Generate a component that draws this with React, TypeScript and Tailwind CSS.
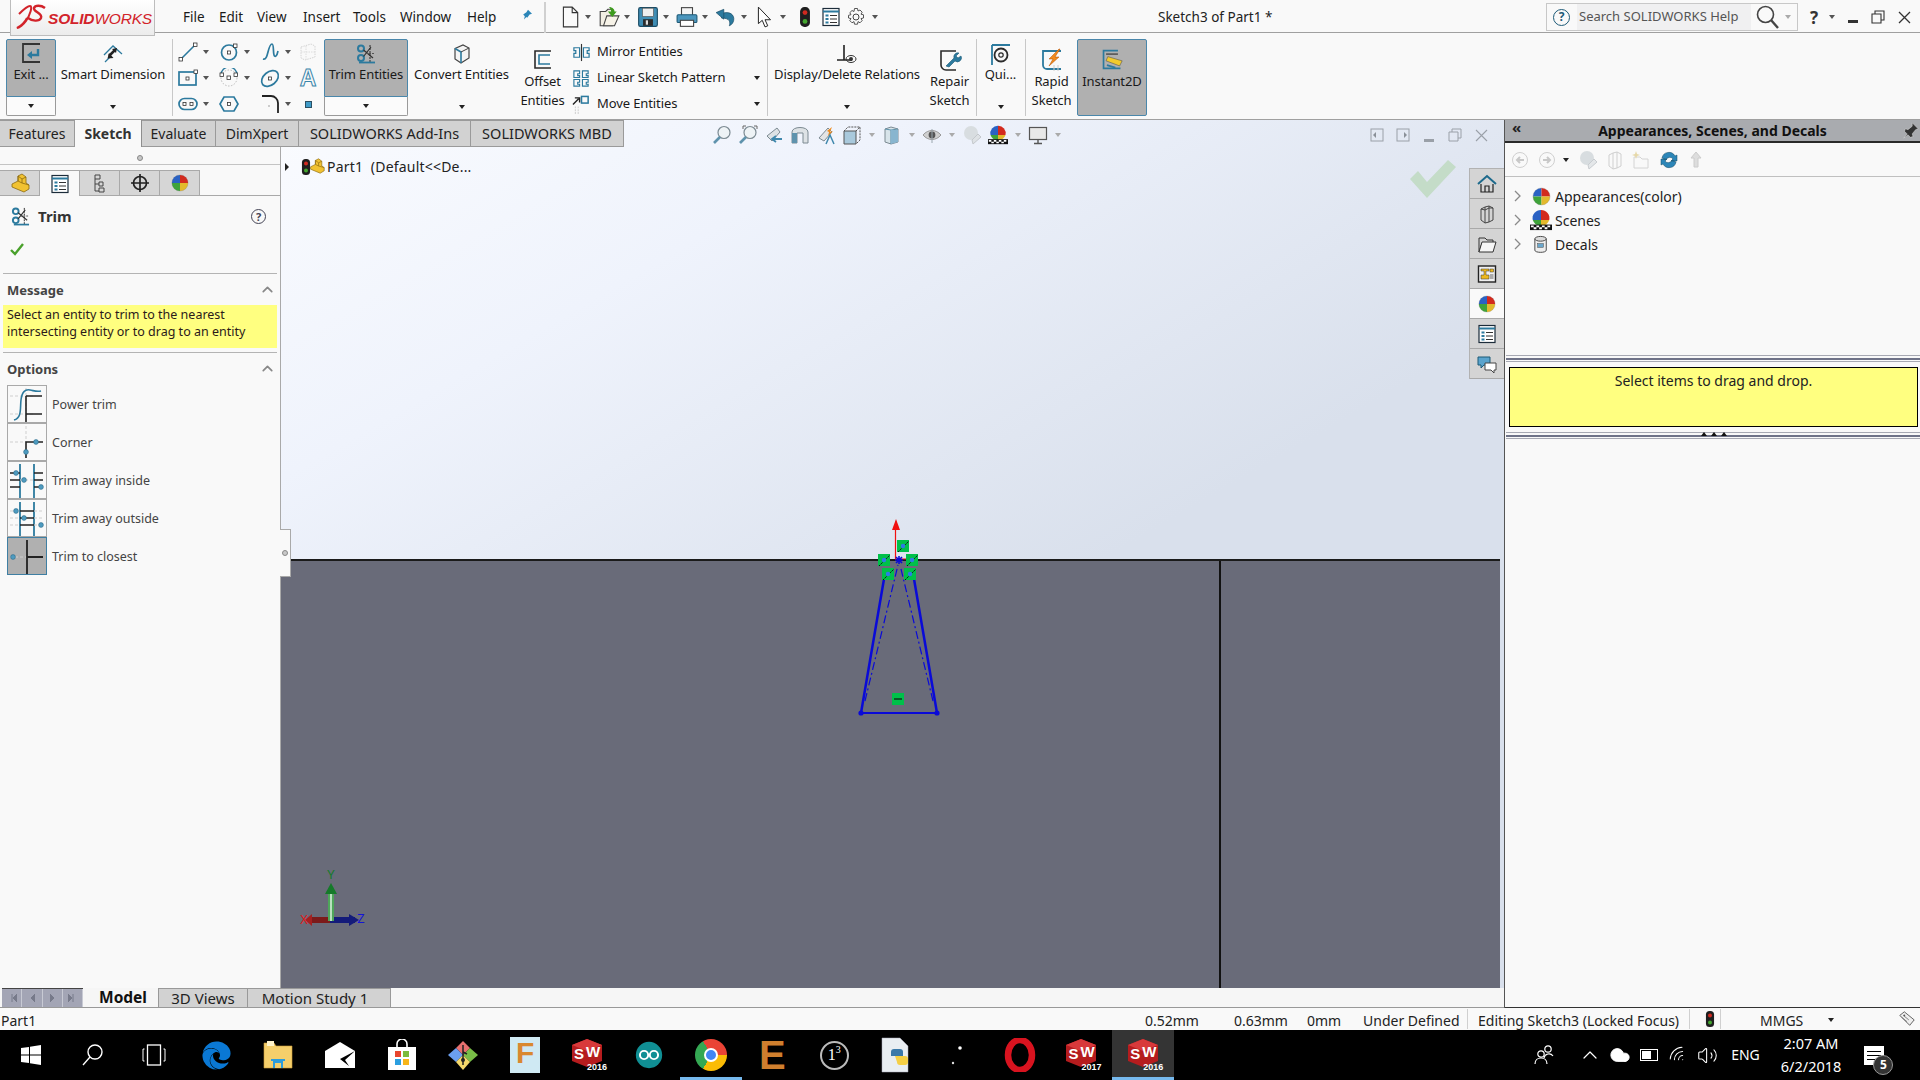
import type { ReactNode } from "react";
import { Cloud, ChevronUp, Wifi, Volume2 } from "lucide-react";
import { FaEdge } from "react-icons/fa";

const BLUE = "#2c7a9e";
const DARK = "#2b2b2b";

function Caret({ dark = false, light = false }: { dark?: boolean; light?: boolean }) {
  return (
    <span
      className={`block h-0 w-0 shrink-0 border-x-[3.5px] border-t-[4px] border-x-transparent ${
        light ? "border-t-[#aaaaaa]" : dark ? "border-t-[#222222]" : "border-t-[#555555]"
      }`}
    />
  );
}

function Svg({ s = 20, vb = 20, children }: { s?: number; vb?: number; children: ReactNode }) {
  return (
    <svg width={s} height={s} viewBox={`0 0 ${vb} ${vb}`} fill="none" className="block shrink-0">
      {children}
    </svg>
  );
}

function Ball({ s = 18 }: { s?: number }) {
  return (
    <Svg s={s}>
      <path d="M10 10V1A9 9 0 0 0 1 10Z" fill="#2a62c4" />
      <path d="M10 10V1A9 9 0 0 1 19 10Z" fill="#d32a1e" />
      <path d="M10 10H1A9 9 0 0 0 10 19Z" fill="#3fa33a" />
      <path d="M10 10H19A9 9 0 0 1 10 19Z" fill="#e3b92c" />
      <circle cx="10" cy="10" r="9" stroke="#55555555" strokeWidth="0.6" />
    </Svg>
  );
}

function Scenes({ s = 24 }: { s?: number }) {
  return (
    <Svg s={s} vb={24}>
      <path d="M12 12V1A9 9 0 0 0 3 12Z" fill="#2a62c4" />
      <path d="M12 12V1A9 9 0 0 1 21 12Z" fill="#d32a1e" />
      <path d="M3 12a9 9 0 0 0 9 6V12Z" fill="#3fa33a" />
      <path d="M21 12a9 9 0 0 1-9 6V12Z" fill="#e3b92c" />
      <rect x="0" y="17" width="24" height="6" fill="#111" />
      <path d="M1 18h3v2H1ZM7 18h3v2H7ZM13 18h3v2h-3ZM19 18h3v2h-3ZM4 20h3v2H4ZM10 20h3v2h-3ZM16 20h3v2h-3Z" fill="#fff" />
    </Svg>
  );
}

function Traffic({ s = 20 }: { s?: number }) {
  return (
    <Svg s={s}>
      <rect x="5.5" y="1" width="9" height="18" rx="4" fill="#1f1f1f" />
      <circle cx="10" cy="6" r="2.2" fill="#d12a20" />
      <circle cx="10" cy="14" r="2.2" fill="#43a62e" />
    </Svg>
  );
}

function ListIcon({ s = 20 }: { s?: number }) {
  return (
    <Svg s={s}>
      <rect x="2" y="1.5" width="16" height="17" fill="#fff" stroke="#1c2c3a" strokeWidth="1.2" />
      <path d="M2 4.5h16" stroke="#2c7a9e" strokeWidth="2" />
      <path d="M4.500 7.500h3v2h-3ZM4.500 11h3v2h-3ZM4.500 14.500h3v2h-3Z" fill="#2c7a9e" />
      <path d="M9 8.500h7M9 12h7M9 15.500h7" stroke="#333" />
    </Svg>
  );
}

function PartIcon({ s = 20 }: { s?: number }) {
  return (
    <Svg s={s}>
      <path d="M2 11 8 8V3l4-2 4 3v6l3 2v4l-5 3-12-5Z" fill="#f1c232" stroke="#8a6a10" strokeWidth="0.8" />
      <path d="M8 3l4 3v4l-4-2ZM12 10l7 2M12 6l4-2" stroke="#8a6a10" strokeWidth="0.8" />
    </Svg>
  );
}

function TrimIcon({ s = 20 }: { s?: number }) {
  return (
    <Svg s={s}>
      <circle cx="5" cy="4.500" r="3" stroke={BLUE} strokeWidth="2" />
      <circle cx="5" cy="14" r="3" stroke={BLUE} strokeWidth="2" />
      <path d="M7.500 6 17 14M7.500 12.500 15 3" stroke="#333" strokeWidth="1.200" />
      <path d="M14 1v18" stroke={DARK} strokeWidth="1" strokeDasharray="2 1" />
      <path d="M3 18.500h16" stroke={BLUE} strokeWidth="1.800" />
      <path d="M10 9.500h9" stroke="#555" strokeWidth="1" strokeDasharray="2 1" />
    </Svg>
  );
}

function ExitIcon() {
  return (
    <Svg s={24} vb={24}>
      <path d="M21 2H4v18h17" stroke="#333" strokeWidth="1.800" />
      <path d="M19 7v6h-9" stroke={BLUE} strokeWidth="2.400" />
      <path d="M8 13l5-4v8Z" fill={BLUE} />
    </Svg>
  );
}

function SmartDimIcon() {
  return (
    <Svg s={22} vb={22}>
      <path d="M2 12l9-9 9 8" stroke="#2c7a9e" strokeWidth="1.300" />
      <path d="M3 19l5-5" stroke={BLUE} strokeWidth="1.300" />
      <path d="M7 13 13 7" stroke="#222" strokeWidth="2.500" />
      <path d="M5.500 15.500 7 10l4.500 5ZM15 5l-1 5-4-4Z" fill="#222" />
    </Svg>
  );
}

function ConvertIcon() {
  return (
    <Svg s={22} vb={22}>
      <path d="M4 5.500 12 2l6 3v10l-8 5-6-4Z" fill="#f4f4f4" stroke="#444" strokeWidth="1.200" />
      <path d="M4 5.500l6 3.500v11" stroke={BLUE} strokeWidth="1.600" />
      <path d="M10 9l8-4" stroke="#444" />
    </Svg>
  );
}

function OffsetIcon() {
  return (
    <Svg s={22} vb={22}>
      <path d="M19 2H3v17h16" stroke="#2b2b2b" strokeWidth="1.600" />
      <path d="M18 6H7v9h11" stroke={BLUE} strokeWidth="1.600" />
    </Svg>
  );
}

function DisplayIcon() {
  return (
    <Svg s={22} vb={22}>
      <path d="M8 2v15M1 17h15" stroke="#222" strokeWidth="1.600" />
      <ellipse cx="15" cy="16" rx="5" ry="3.500" stroke="#333" />
      <circle cx="15" cy="16" r="2" fill="#333" />
    </Svg>
  );
}

function RepairIcon() {
  return (
    <Svg s={24} vb={24}>
      <path d="M18 22H8a5 5 0 0 1-5-5V3h15" stroke="#2b2b2b" strokeWidth="1.600" />
      <path d="M8 18l8-8a4 4 0 0 1 5-5l-3 3 2 2 3-2a4 4 0 0 1-6 5l-6 6Z" fill={BLUE} stroke="#1d5a77" strokeWidth="0.600" />
    </Svg>
  );
}

function QuickIcon() {
  return (
    <Svg s={24} vb={24}>
      <path d="M3 3h18M3 3v20" stroke={BLUE} strokeWidth="1.800" />
      <circle cx="12" cy="13" r="6.500" stroke="#2b2b2b" strokeWidth="1.800" />
      <circle cx="12" cy="13" r="2.200" stroke="#2b2b2b" strokeWidth="1.200" />
    </Svg>
  );
}

function RapidIcon() {
  return (
    <Svg s={24} vb={24}>
      <path d="M21 3H3v14a4 4 0 0 0 4 4h14" stroke={BLUE} strokeWidth="1.800" />
      <path d="M19 1 9 11h4l-4 7 10-9h-4l5-8Z" fill="#f08a1d" stroke="#b34c00" strokeWidth="0.500" />
      <path d="M14 17v6M18 17v6" stroke="#ccc" />
    </Svg>
  );
}

function InstantIcon() {
  return (
    <Svg s={22} vb={26}>
      <path d="M20 2H3v21h20" stroke={BLUE} strokeWidth="2" />
      <path d="M6 6h14" stroke="#333" strokeWidth="1.400" />
      <path d="M8 9l17 5-3 6-16-6Z" fill="#f2cb2d" stroke="#555" strokeWidth="0.700" />
      <path d="M7 19l10 3" stroke={BLUE} strokeWidth="2" />
    </Svg>
  );
}

const sketchTools: ReactNode[] = [
  <>
    <path d="M3 17 17 3" stroke={BLUE} strokeWidth="1.600" />
    <rect x="1" y="15.500" width="3.500" height="3.500" fill="#fff" stroke="#333" strokeWidth="0.800" />
    <rect x="15.500" y="1" width="3.500" height="3.500" fill="#fff" stroke="#333" strokeWidth="0.800" />
  </>,
  <>
    <circle cx="10" cy="10.500" r="7.500" stroke={BLUE} strokeWidth="1.700" />
    <rect x="8.500" y="9" width="3" height="3" fill="#fff" stroke="#333" strokeWidth="0.800" />
    <rect x="14.500" y="2" width="3.500" height="3.500" fill="#fff" stroke="#333" strokeWidth="0.800" />
  </>,
  <path d="M3 17c3 1 4-3 5-7s2-8 4-8 1 8 2 11 3 1 4-4" stroke={BLUE} strokeWidth="1.700" />,
  <>
    <rect x="1" y="4" width="17" height="13" stroke={BLUE} strokeWidth="1.700" />
    <rect x="8" y="9" width="3" height="3" fill="#fff" stroke="#333" strokeWidth="0.800" />
    <rect x="16" y="2" width="3.500" height="3.500" fill="#fff" stroke="#333" strokeWidth="0.800" />
  </>,
  <>
    <path d="M2 7a8 8 0 0 1 16 0" stroke={BLUE} strokeWidth="1.400" />
    <circle cx="10" cy="10" r="8" stroke="#bbb" strokeDasharray="1.500 1.500" />
    <rect x="1" y="5" width="3.500" height="3.500" fill="#fff" stroke="#333" strokeWidth="0.800" />
    <rect x="8" y="8" width="3.500" height="3.500" fill="#fff" stroke="#333" strokeWidth="0.800" />
    <rect x="15" y="5" width="3.500" height="3.500" fill="#fff" stroke="#333" strokeWidth="0.800" />
  </>,
  <>
    <ellipse cx="10" cy="10.500" rx="9.500" ry="6.500" transform="rotate(-40 10 10.500)" stroke={BLUE} strokeWidth="1.700" />
    <rect x="8.500" y="9" width="3" height="3" fill="#fff" stroke="#333" strokeWidth="0.800" />
  </>,
  <>
    <rect x="1" y="4.500" width="18" height="11" rx="5.500" stroke={BLUE} strokeWidth="1.700" />
    <rect x="5" y="8.500" width="3" height="3" fill="#fff" stroke="#333" strokeWidth="0.800" />
    <rect x="12" y="8.500" width="3" height="3" fill="#fff" stroke="#333" strokeWidth="0.800" />
  </>,
  <>
    <path d="M5 3h10l4 7-4 7H5l-4-7Z" stroke={BLUE} strokeWidth="1.700" />
    <rect x="8.500" y="8.500" width="3" height="3" fill="#fff" stroke="#333" strokeWidth="0.800" />
  </>,
  <>
    <path d="M2 2h9a7 7 0 0 1 7 7v10" stroke="#222" strokeWidth="1.800" />
    <path d="M8 11l2 2M10 11l-2 2" stroke="#ccc" />
  </>,
];

function SketchGrid() {
  const lastCol = [
    <div key="plane" className="flex h-[26px] items-center justify-center">
      <Svg>
        <path d="M3 5l10-3 4 2v11l-10 3-4-2Z" stroke="#d4d4d4" strokeDasharray="1.500 1" />
        <path d="M8 4v14M3 10h14" stroke="#dddddd" strokeDasharray="1.500 1" />
      </Svg>
    </div>,
    <div
      key="a"
      className="flex h-[26px] items-center justify-center font-['Liberation_Sans',sans-serif] text-[23px] font-bold leading-none text-transparent [-webkit-text-stroke:1px_#3a86ab]"
    >
      A
    </div>,
    <div key="pt" className="flex h-[26px] items-center justify-center">
      <span className="block h-[7px] w-[7px] border border-[#2b4f63] bg-[#3f9bc8]" />
    </div>,
  ];
  return (
    <div className="ml-[3px] grid h-[78px] grid-cols-[41px_41px_38px_24px] grid-rows-3">
      {sketchTools.flatMap((tool, i) => {
        const cell = (
          <div key={i} className="flex h-[26px] items-center">
            <span className="flex w-[24px] justify-center">
              <Svg>{tool}</Svg>
            </span>
            {i !== 7 && (
              <span className="ml-[3px]">
                <Caret />
              </span>
            )}
          </div>
        );
        return (i + 1) % 3 === 0 ? [cell, lastCol[(i + 1) / 3 - 1]] : [cell];
      })}
    </div>
  );
}

function BigTool({
  w,
  ml,
  label,
  icon,
  active = false,
}: {
  w: string;
  ml: string;
  label: string;
  icon: ReactNode;
  active?: boolean;
}) {
  return (
    <div className={`flex h-[77px] flex-col ${w} ${ml}`}>
      <div
        className={`flex h-[58px] flex-col items-center ${
          active ? "rounded-t-[2px] border border-[#4a87ab] bg-[#b0b0b0]" : "border border-transparent"
        }`}
      >
        <div className="flex h-[27px] items-center justify-center">{icon}</div>
        <span className="whitespace-nowrap text-center text-[13px] leading-[14px] tracking-[-0.1px] text-[#1a1a1a]">{label}</span>
      </div>
      <div
        className={`flex h-[19px] items-center justify-center ${
          active ? "rounded-b-[2px] border border-t-0 border-[#9a9a9a] bg-[#fbfbfb]" : ""
        }`}
      >
        <Caret dark />
      </div>
    </div>
  );
}

function TallTool({
  w,
  ml,
  lines,
  icon,
  active = false,
}: {
  w: string;
  ml: string;
  lines: string[];
  icon: ReactNode;
  active?: boolean;
}) {
  return (
    <div
      className={`flex h-[77px] flex-col items-center ${w} ${ml} ${
        active ? "rounded-[2px] border border-[#4a87ab] bg-[#b0b0b0] pt-[8px]" : "pt-[9px]"
      }`}
    >
      <div className="flex h-[24px] items-center justify-center">{icon}</div>
      {lines.map((line) => (
        <span key={line} className="whitespace-nowrap text-[13px] leading-[19px] tracking-[-0.1px] text-[#1a1a1a]">
          {line}
        </span>
      ))}
    </div>
  );
}

function Divider({ ml }: { ml: string }) {
  return <div className={`h-[77px] w-px bg-[#c8c8c8] ${ml}`} />;
}

function EntityList() {
  const rows: { label: string; caret: boolean; icon: ReactNode }[] = [
    {
      label: "Mirror Entities",
      caret: false,
      icon: (
        <>
          <path d="M10 1v18" stroke="#333" strokeWidth="1.200" />
          <path d="M8 5H2v3h2v3H2v4h6ZM12 5h6v3h-2v3h2v4h-6Z" stroke={BLUE} strokeWidth="1.300" />
        </>
      ),
    },
    {
      label: "Linear Sketch Pattern",
      caret: true,
      icon: <path d="M2 2h6v3H6v2h2v2H2ZM11 2h6v3h-2v2h2v2h-6ZM2 11h6v3H6v2h2v2H2ZM11 11h6v3h-2v2h2v2h-6Z" stroke={BLUE} strokeWidth="1.200" />,
    },
    {
      label: "Move Entities",
      caret: true,
      icon: (
        <>
          <path d="M1 10 7 4M3 3h5v5" stroke="#222" strokeWidth="1.500" />
          <rect x="10" y="1.500" width="7" height="7" stroke={BLUE} strokeWidth="1.600" />
          <path d="M3 13h1M6 13h1M3 16h1M6 16h1M3 19h1M6 19h1" stroke="#cccccc" strokeWidth="2" />
        </>
      ),
    },
  ];
  return (
    <div className="ml-[7px] flex h-[78px] w-[190px] flex-col">
      {rows.map((row) => (
        <div key={row.label} className="flex h-[26px] items-center">
          <span className="flex w-[20px] justify-center">
            <Svg s={19}>{row.icon}</Svg>
          </span>
          <span className="ml-[6px] flex-1 whitespace-nowrap text-[13px] tracking-[-0.1px] text-[#1a1a1a]">{row.label}</span>
          {row.caret && (
            <span className="mr-[1px]">
              <Caret dark />
            </span>
          )}
        </div>
      ))}
    </div>
  );
}

function DsLogo() {
  return (
    <svg width="32" height="28" viewBox="0 0 32 28" fill="none" className="block shrink-0">
      <path d="M4 11c6-6 9-8 11-8 3 0 0 9-4 15-2 3-7 7-9 7 4-2 8-6 10-10" stroke="#d2232a" strokeWidth="2" />
      <path d="M30 5c-4-3-10-3-11 0-1 4 9 5 7 10-2 4-9 3-13 0" stroke="#d2232a" strokeWidth="2.400" />
    </svg>
  );
}

function QuickAccess() {
  const tools: ReactNode[] = [
    <path key="new" d="M4 1h8l5 5v13H4ZM12 1v5h5" fill="#fafafa" stroke="#333" strokeWidth="1" />,
    <g key="open">
      <path d="M2 5h5l2-2h4v15H5L2 18Z" fill="#f3efe4" stroke="#444" />
      <path d="M5 18l3-9h11l-4 9Z" fill="#f7f3e8" stroke="#444" />
      <path d="M10 1c3 0 5 2 5 4h2l-4 5-4-5h3c0-1-1-3-2-4Z" fill="#3d9b1d" />
    </g>,
    <g key="save">
      <rect x="1.500" y="1.500" width="17" height="17" rx="1.500" fill="#3f8db4" stroke="#1a4a63" />
      <rect x="5" y="2" width="10" height="7.500" fill="#eee" stroke="#555" strokeWidth="0.600" />
      <rect x="5.500" y="12" width="9" height="6" fill="#2b2b2b" />
      <rect x="8" y="13" width="2" height="4" fill="#ddd" />
    </g>,
    <g key="print">
      <rect x="5" y="1.500" width="10" height="8" fill="#f5f5f5" stroke="#444" />
      <rect x="1" y="8" width="18" height="7" rx="1" fill="#4b96bd" stroke="#1d5a77" />
      <rect x="4" y="13" width="12" height="5.500" fill="#fff" stroke="#444" />
    </g>,
    <g key="undo">
      <path d="M6 7c7-3 12 1 11 6-.4 2-1.500 4-4 5 1-3 1-7-7-7Z" fill="#2c7a9e" stroke="#174a63" strokeWidth="0.600" />
      <path d="M1 6l7-3v9Z" fill="#2c7a9e" stroke="#174a63" strokeWidth="0.600" />
    </g>,
    <path key="sel" d="M4 1v15l3.500-3 2.500 6 2.500-1-2.500-5.500h5Z" fill="#fff" stroke="#222" strokeWidth="0.900" />,
  ];
  return (
    <div className="flex items-center">
      {tools.map((icon, i) => (
        <div key={i} className="flex w-[39px] items-center">
          <span className="flex w-[24px] justify-center">
            <Svg s={22}>{icon}</Svg>
          </span>
          <span className="ml-[3px]">
            <Caret />
          </span>
        </div>
      ))}
      <span className="ml-[3px] flex w-[20px] justify-center">
        <Traffic s={22} />
      </span>
      <span className="ml-[5px] flex w-[22px] justify-center">
        <ListIcon s={20} />
      </span>
      <span className="ml-[3px] flex w-[22px] justify-center">
        <Svg s={20}>
          <circle cx="10" cy="10" r="3" stroke="#444" />
          <path
            d="M8.500 1.500h3l.5 2.500 2-1 2.200 2.200-1.200 2 2.500.6v3.200l-2.500.6 1.200 2-2.200 2.200-2-1.200-.5 2.600h-3l-.5-2.600-2 1.200-2.200-2.200 1.200-2-2.500-.6V8.300l2.500-.6-1.200-2 2.200-2.200 2 1Z"
            stroke="#444"
            strokeWidth="0.900"
          />
        </Svg>
      </span>
      <span className="ml-[5px]">
        <Caret />
      </span>
    </div>
  );
}

function TitleBar() {
  const menu = [
    ["File", "w-[36px]"],
    ["Edit", "w-[38px]"],
    ["View", "w-[46px]"],
    ["Insert", "w-[50px]"],
    ["Tools", "w-[47px]"],
    ["Window", "w-[67px]"],
    ["Help", "w-[52px]"],
  ];
  return (
    <div className="flex h-[33px] shrink-0 items-center border-b border-[#a0a0a0] bg-[#f9f9f9] pt-[2px]">
      <div className="relative z-20 -mt-[2px] ml-[10px] flex h-[36px] w-[145px] items-start gap-[1px] self-start border border-t-0 border-[#bdbdbd] bg-[linear-gradient(#ffffff,#ececec)] pl-[4px] pt-[3px]">
        <DsLogo />
        <span className="mt-[7px] whitespace-nowrap font-['Liberation_Sans',sans-serif] text-[15.5px] italic leading-[18px] tracking-[-0.2px] text-[#d2232a]">
          <b>SOLID</b>WORKS
        </span>
      </div>
      <div className="ml-[28px] flex text-[13.5px] text-[#1a1a1a]">
        {menu.map(([m, w]) => (
          <span key={m} className={w}>
            {m}
          </span>
        ))}
      </div>
      <span className="ml-[1px]">
        <Svg s={16}>
          <path d="M10 1l5 5-3 1-3 4-1-1-3 3 1-4-2-2 4-3Z" fill="#2c86b8" />
        </Svg>
      </span>
      <div className="ml-[8px] mr-[12px] h-[31px] w-[2px] bg-[#d0d0d0]" />
      <QuickAccess />
      <span className="ml-[280px] w-[113px] whitespace-nowrap text-[13.5px] text-[#222]">Sketch3 of Part1 *</span>
      <div className="ml-[275px] flex h-[28px] w-[252px] items-center border border-[#c8c8c8]">
        <span className="ml-[6px] flex h-[17px] w-[17px] items-center justify-center rounded-full border border-[#1d5a77] text-[12px] font-bold leading-none text-[#1d5a77]">
          ?
        </span>
        <span className="ml-[7px] flex h-[26px] w-[174px] items-center bg-[#f0f0f1] pl-[2px] text-[13px] text-[#555]">
          Search SOLIDWORKS Help
        </span>
        <span className="ml-[4px]">
          <Svg s={26} vb={26}>
            <circle cx="10.500" cy="10.500" r="8" stroke="#444" strokeWidth="1.600" />
            <path d="M16 16l7 8" stroke="#444" strokeWidth="2.400" />
          </Svg>
        </span>
        <span className="ml-[4px]">
          <Caret light />
        </span>
      </div>
      <span className="ml-[12px] w-[10px] text-[17px] font-bold leading-none text-[#333]">?</span>
      <span className="ml-[9px]">
        <Caret />
      </span>
      <span className="ml-[13px] mt-[8px] h-[3px] w-[10px] bg-[#333]" />
      <span className="ml-[13px]">
        <Svg s={14} vb={14}>
          <path d="M1 4h9v9H1ZM4 4V1h9v9h-3" stroke="#333" strokeWidth="1.100" />
        </Svg>
      </span>
      <span className="ml-[13px]">
        <Svg s={13} vb={13}>
          <path d="M1 1l11 11M12 1 1 12" stroke="#333" strokeWidth="1.300" />
        </Svg>
      </span>
    </div>
  );
}

function Ribbon() {
  return (
    <div className="flex h-[87px] shrink-0 items-start border-b border-[#a0a0a0] bg-[#f9f9f9] pt-[6px]">
      <BigTool w="w-[50px]" ml="ml-[6px]" label="Exit ..." icon={<ExitIcon />} active />
      <BigTool w="w-[104px]" ml="ml-[5px]" label="Smart Dimension" icon={<SmartDimIcon />} />
      <Divider ml="ml-[7px]" />
      <SketchGrid />
      <BigTool w="w-[84px]" ml="ml-[4px]" label="Trim Entities" icon={<TrimIcon />} active />
      <BigTool w="w-[97px]" ml="ml-[5px]" label="Convert Entities" icon={<ConvertIcon />} />
      <TallTool w="w-[43px]" ml="ml-[11px]" lines={["Offset", "Entities"]} icon={<OffsetIcon />} />
      <EntityList />
      <Divider ml="ml-[6px]" />
      <BigTool w="w-[148px]" ml="ml-[5px]" label="Display/Delete Relations" icon={<DisplayIcon />} />
      <TallTool w="w-[47px]" ml="ml-[5px]" lines={["Repair", "Sketch"]} icon={<RepairIcon />} />
      <Divider ml="ml-[3px]" />
      <BigTool w="w-[31px]" ml="ml-[8px]" label="Qui..." icon={<QuickIcon />} />
      <Divider ml="ml-[9px]" />
      <TallTool w="w-[41px]" ml="ml-[5px]" lines={["Rapid", "Sketch"]} icon={<RapidIcon />} />
      <TallTool w="w-[70px]" ml="ml-[5px]" lines={["Instant2D"]} icon={<InstantIcon />} active />
    </div>
  );
}

function CommandTabs() {
  const tabs = [
    ["Features", "w-[75px] text-[14px]"],
    ["Sketch", "w-[67px] text-[14px]"],
    ["Evaluate", "w-[74px] text-[14px]"],
    ["DimXpert", "w-[83px] text-[14px]"],
    ["SOLIDWORKS Add-Ins", "w-[172px] text-[14.5px]"],
    ["SOLIDWORKS MBD", "w-[153px] text-[14.5px]"],
  ];
  return (
    <div className="flex h-[27px] shrink-0">
      {tabs.map(([t, w]) => (
        <div
          key={t}
          className={`flex items-center justify-center border-r border-[#8e8e8e] ${w} ${
            t === "Sketch" ? "bg-[#f9f9f9] font-bold text-[#333]" : "border-y border-[#9a9a9a] bg-[#d2d2d2] text-[#222]"
          }`}
        >
          {t}
        </div>
      ))}
    </div>
  );
}

function OptionIcon({ kind }: { kind: number }) {
  const dash = "#cfcfcf";
  const dot = (x: number, y: number) => <circle cx={x} cy={y} r="2.400" fill="#4e9bc0" stroke="#2c6a88" strokeWidth="0.600" />;
  return (
    <svg width="38" height="36" viewBox="0 0 38 36" fill="none" className="block">
      {kind === 0 && (
        <>
          <path d="M2 10h24M2 28h24M18 2v34" stroke={dash} strokeDasharray="3 2" />
          <path d="M18 10h16M18 28h16M18 10v26" stroke="#222" strokeWidth="1.600" />
          <path d="M6 34c8-2 6-12 7-20 1-8 4-11 9-10s7 2 11 1" stroke={BLUE} strokeWidth="1.600" />
        </>
      )}
      {kind === 1 && (
        <>
          <path d="M2 18h16M18 2v16" stroke={dash} strokeDasharray="3 2" />
          <path d="M18 34V18h17" stroke="#222" strokeWidth="1.600" />
          {dot(28, 18)}
          {dot(18, 28)}
        </>
      )}
      {kind === 2 && (
        <>
          <path d="M12 2v34M26 2v34" stroke={BLUE} strokeWidth="1.800" />
          <path d="M12 18h14" stroke={dash} strokeDasharray="3 2" />
          <path d="M2 11h10M2 18h10M2 25h10M26 11h9M26 18h9M26 25h9" stroke="#222" strokeWidth="1.600" />
          {dot(8, 11)}
          {dot(16, 18)}
          {dot(33, 25)}
        </>
      )}
      {kind === 3 && (
        <>
          <path d="M12 2v34M26 2v34" stroke={BLUE} strokeWidth="1.800" />
          <path d="M2 11h10M2 18h10M2 25h10M26 11h9M26 18h9M26 25h9" stroke={dash} strokeDasharray="3 2" />
          <path d="M12 11h14M12 18h14M12 25h14" stroke="#222" strokeWidth="1.600" />
          {dot(8, 11)}
          {dot(16, 18)}
          {dot(33, 25)}
        </>
      )}
      {kind === 4 && (
        <>
          <path d="M2 19h16" stroke={dash} strokeDasharray="3 2" />
          <path d="M19 2v36M19 19h16" stroke="#222" strokeWidth="1.800" />
          {dot(5, 19)}
        </>
      )}
    </svg>
  );
}

function SectionHeading({ label }: { label: string }) {
  return (
    <div className="flex h-[31px] items-center justify-between pl-[7px] pr-[4px] pt-[2px]">
      <span className="text-[13px] font-bold text-[#444]">{label}</span>
      <ChevronUp size={17} strokeWidth={2.400} className="-mt-[2px] text-[#888]" />
    </div>
  );
}

function LeftPanel() {
  const options = ["Power trim", "Corner", "Trim away inside", "Trim away outside", "Trim to closest"];
  return (
    <aside className="relative z-10 flex w-[281px] shrink-0 flex-col border-r border-[#a9a9a9] bg-[#f9f9f9]">
      <div className="flex h-[18px] items-start justify-center border-b border-[#c4c4c4] pt-[8px]">
        <span className="h-[6px] w-[6px] rounded-full border border-[#888] bg-[#c8c8c8]" />
      </div>
      <div className="mt-[5px] flex h-[26px] border-b border-[#a9a9a9]">
        {[
          <PartIcon key="p" />,
          <ListIcon key="l" />,
          <Svg key="c">
            <path d="M5 2h5v4H5ZM5 6v12h4M5 11h4M9 9h4v4H9ZM9 15h5v4H9Z" stroke="#444" />
          </Svg>,
          <Svg key="t">
            <circle cx="10" cy="10" r="6.500" stroke="#222" strokeWidth="1.700" />
            <path d="M10 1v18M1 10h18" stroke="#222" strokeWidth="1.700" />
          </Svg>,
          <Ball key="b" />,
        ].map((icon, i) => (
          <div
            key={i}
            className={`flex h-[25px] w-[40px] items-center justify-center border-r border-t border-[#a9a9a9] ${
              i === 1 ? "h-[26px] bg-[#f9f9f9]" : "bg-[#d6d6d6]"
            }`}
          >
            {icon}
          </div>
        ))}
      </div>
      <div className="flex h-[41px] items-center pl-[11px] pr-[14px]">
        <TrimIcon s={19} />
        <span className="ml-[8px] flex-1 text-[15px] font-bold text-[#333]">Trim</span>
        <span className="flex h-[15px] w-[15px] items-center justify-center rounded-full border border-[#445] text-[11px] font-bold leading-none text-[#445]">
          ?
        </span>
      </div>
      <div className="h-[36px] pl-[10px] pt-[5px]">
        <Svg s={14} vb={14}>
          <path d="M1 8l4 4 8-10" stroke="#4aa12c" strokeWidth="2.400" />
        </Svg>
      </div>
      <div className="mx-[3px] border-t border-[#b4b4b4]" />
      <SectionHeading label="Message" />
      <div className="mx-[3px] h-[43px] bg-[#ffff80] px-[4px] pt-[1px] text-[12.5px] leading-[17px] text-[#2b1a1a]">
        Select an entity to trim to the nearest
        <br />
        intersecting entity or to drag to an entity
      </div>
      <div className="mx-[3px] mt-[4px] border-t border-[#b4b4b4]" />
      <SectionHeading label="Options" />
      <div className="mt-[1px] flex flex-col">
        {options.map((label, i) => (
          <div key={label} className="flex h-[38px] items-center">
            <div
              className={`ml-[7px] flex h-[38px] w-[40px] items-center justify-center border ${
                i === 4 ? "border-[#3f7fa3] bg-[#b0b0b0]" : "border-[#a9a9a9] bg-[#f9f9f9]"
              }`}
            >
              <OptionIcon kind={i} />
            </div>
            <span className="ml-[5px] pt-[2px] text-[12.5px] text-[#444]">{label}</span>
          </div>
        ))}
      </div>
    </aside>
  );
}

// blue sketch with relations, sits on the graphics area like a canvas
function SketchDrawing() {
  return (
    <svg width="120" height="220" viewBox="0 0 120 220" fill="none" className="absolute left-[554px] top-[372px]">
      <path d="M61 0l4 11h-8Z" fill="#f01010" />
      <path d="M60.500 8v33M60 40h12" stroke="#f01010" strokeWidth="1.200" />
      <path d="M26 194 49 60M102 194 79 60" stroke="#0a0ad8" strokeWidth="2.500" />
      <path d="M26 194H102" stroke="#0a0ad8" strokeWidth="2" />
      <path d="M30 182 63 46M98 182 66 50" stroke="#0a0ad8" strokeWidth="1.200" strokeDasharray="8 3 2 3" />
      <circle cx="26" cy="194" r="2.600" fill="#0a0ad8" />
      <circle cx="102" cy="194" r="2.600" fill="#0a0ad8" />
      <path d="M60 41h8M64 37v8M61 38l6 6M67 38l-6 6" stroke="#0a0ad8" strokeWidth="1.600" />
      {[
        [68, 27],
        [49, 41],
        [77, 41],
        [53, 55],
        [75, 55],
      ].map(([x, y]) => (
        <g key={`${x}-${y}`}>
          <rect x={x - 6} y={y - 6} width="12" height="12" fill="#00c04a" />
          <path d={`M${x - 5} ${y + 6}L${x + 6} ${y - 5}`} stroke="#111" strokeWidth="1" strokeDasharray="2 1" />
          <circle cx={x} cy={y} r="2.200" fill="#2d7ae8" />
        </g>
      ))}
      <rect x="57" y="174" width="12" height="12" fill="#00c04a" />
      <path d="M59 180h8" stroke="#111" strokeWidth="1.200" />
    </svg>
  );
}

function Triad() {
  return (
    <svg width="80" height="65" viewBox="0 0 80 65" fill="none" className="absolute left-[14px] top-[718px]">
      <rect x="15" y="52" width="20" height="6" fill="#7c1a1a" />
      <path d="M10 55l7-6v12Z" fill="#a52020" />
      <rect x="35" y="52" width="25" height="6" fill="#141b7a" />
      <path d="M64 55l-10-6v12Z" fill="#141b7a" />
      <rect x="33" y="29" width="6" height="27" fill="#4ea65a" />
      <rect x="35" y="29" width="2" height="27" fill="#b8e0be" />
      <path d="M36 18l-6 11h12Z" fill="#157a2a" />
      <text x="9" y="59" textAnchor="middle" fontSize="13" fill="#e01818">X</text>
      <text x="36" y="14" textAnchor="middle" fontSize="13" fill="#157a2a">Y</text>
      <text x="66" y="58" textAnchor="middle" fontSize="13" fill="#1414d8">Z</text>
    </svg>
  );
}

function HeadsUp() {
  const g = "#9aa6ad";
  const mag = (
    <>
      <circle cx="12" cy="7.500" r="6" fill="#eef3f6" stroke="#7c8a92" strokeWidth="1.200" />
      <path d="M8 12l-6 6" stroke="#5f93ad" strokeWidth="2.600" />
    </>
  );
  const items: { w: string; caret?: boolean; icon?: ReactNode }[] = [
    { w: "w-[26px]", icon: mag },
    { w: "w-[26px]", icon: <>{mag}<path d="M8 1H5v3M16 1h3v3" stroke="#666" /></> },
    {
      w: "w-[26px]",
      icon: (
        <>
          <path d="M3 11 13 3l3 4-8 9Z" fill="#dde2e5" stroke="#7c8a92" />
          <path d="M18 14H9M12 11l-4 3 4 3" stroke="#3f88ad" strokeWidth="1.800" />
        </>
      ),
    },
    {
      w: "w-[26px]",
      icon: (
        <>
          <path d="M2 7c0-6 16-6 16 0v11h-5V8H7v10H2Z" fill="#dde2e5" stroke="#7c8a92" />
          <path d="M2 8h5v10H2Z" fill="#5f93ad" />
        </>
      ),
    },
    {
      w: "w-[26px]",
      icon: (
        <>
          <path d="M3 13 12 3l4 4-8 9Z" fill="#e4e4e4" stroke="#7c8a92" />
          <path d="M11 6l5-4-2 5 3-1-5 5 1-4Z" fill="#ee8a1c" />
          <path d="M10 19l4-9 4 9" stroke="#3f88ad" strokeWidth="1.500" />
        </>
      ),
    },
    {
      w: "w-[26px]",
      icon: (
        <>
          <path d="M2 6h12v13H2Z" fill="#a9c9dc" stroke="#555" />
          <path d="M2 6l4-4h12v13l-4 4M14 6l4-4" stroke="#555" strokeDasharray="2 1" />
        </>
      ),
    },
    { w: "w-[14px]", caret: true },
    {
      w: "w-[26px]",
      icon: (
        <>
          <path d="M3 4l6-2 7 2v13l-7 2-6-2Z" fill="#d8e4ea" stroke="#7c8a92" />
          <path d="M9 5v14M3 4l6 1 7-1" stroke="#5f93ad" strokeWidth="1.200" />
          <path d="M9 5h7v12l-7 2Z" fill="#88b5cf" />
        </>
      ),
    },
    { w: "w-[14px]", caret: true },
    {
      w: "w-[26px]",
      icon: (
        <>
          <path d="M1 10c5-6 13-6 18 0-5 6-13 6-18 0Z" fill="#cfcfcf" stroke="#9a9a9a" />
          <circle cx="10" cy="10" r="3.400" fill="#555" />
          <path d="M10 4v14" stroke={g} />
        </>
      ),
    },
    { w: "w-[14px]", caret: true },
    {
      w: "w-[26px]",
      icon: (
        <>
          <circle cx="9" cy="8" r="7" fill="#d8dde0" />
          <path d="M10 15l6-6 3 3-8 7Z" fill="#dee2e5" stroke="#c4c8cc" />
        </>
      ),
    },
    { w: "w-[26px]", icon: <Scenes s={20} /> },
    { w: "w-[14px]", caret: true },
    {
      w: "w-[26px]",
      icon: (
        <>
          <rect x="1.500" y="2.500" width="17" height="12" fill="#e8e8e8" stroke="#555" strokeWidth="1.200" />
          <path d="M10 15v3M6 18.500h8" stroke="#555" strokeWidth="1.400" />
        </>
      ),
    },
    { w: "w-[14px]", caret: true },
  ];
  return (
    <div className="absolute left-[709px] top-[5px] flex h-[20px] items-center">
      {items.map((it, i) => (
        <span key={i} className={`flex justify-center ${it.w}`}>
          {it.caret ? <Caret light /> : <Svg>{it.icon}</Svg>}
        </span>
      ))}
    </div>
  );
}

function ViewportControls() {
  return (
    <div className="absolute left-[1364px] top-[6px] flex h-[18px] items-center">
      <span className="flex w-[26px] justify-center">
        <Svg s={14} vb={14}>
          <rect x="1" y="1" width="12" height="12" stroke="#9aa0a8" />
          <path d="M6 4l-3 3 3 3Z" fill="#8a9098" />
        </Svg>
      </span>
      <span className="flex w-[26px] justify-center">
        <Svg s={14} vb={14}>
          <rect x="1" y="1" width="12" height="12" stroke="#9aa0a8" />
          <path d="M8 4l3 3-3 3Z" fill="#8a9098" />
        </Svg>
      </span>
      <span className="flex w-[26px] justify-center pt-[10px]">
        <span className="block h-[3px] w-[10px] bg-[#9aa0a8]" />
      </span>
      <span className="flex w-[26px] justify-center">
        <Svg s={14} vb={14}>
          <path d="M1 4h9v9H1ZM4 4V1h9v9h-3" stroke="#9aa0a8" />
        </Svg>
      </span>
      <span className="flex w-[26px] justify-center">
        <Svg s={13} vb={13}>
          <path d="M1 1l11 11M12 1 1 12" stroke="#9aa0a8" strokeWidth="1.100" />
        </Svg>
      </span>
    </div>
  );
}

function TaskPaneTabs() {
  const icons: ReactNode[] = [
    <Svg key="h" s={20}>
      <path d="M1 10 10 2l9 8" stroke="#1d6a8c" strokeWidth="2" />
      <path d="M4 10v8h12v-8M8 18v-6h4v6" stroke="#222" strokeWidth="1.200" />
    </Svg>,
    <Svg key="b" s={20}>
      <path d="M4 5l4-2 4-1 4 2v12l-4 2-4 1-4-3Z" stroke="#444" />
      <path d="M8 3v16M12 2v16M4 5l4 1 4-2 4 0" stroke="#444" />
    </Svg>,
    <Svg key="f" s={20}>
      <path d="M2 4h6l2 2h6v3H5L2 18Z" stroke="#333" />
      <path d="M5 8h14l-3 10H2Z" fill="#f6f6f6" stroke="#333" />
    </Svg>,
    <Svg key="v" s={20}>
      <rect x="1.500" y="2" width="17" height="16" fill="#f0f0f0" stroke="#222" strokeWidth="1.400" />
      <path d="M4 5h8v2H9v4h3v4H4v-4h3V7H4Z" fill="#eeb91e" stroke="#333" strokeWidth="0.500" />
      <rect x="13" y="5" width="3.500" height="3" fill="#eeb91e" stroke="#333" strokeWidth="0.500" />
      <rect x="13" y="10" width="3.500" height="5" fill="#aaa" />
    </Svg>,
    <Ball key="a" s={18} />,
    <ListIcon key="l" s={20} />,
    <Svg key="c" s={20}>
      <path d="M1 3h12v8H7l-3 3v-3H1Z" fill="#5ba4cd" stroke="#1d5a77" />
      <path d="M8 9h11v7h-2v3l-3-3H8Z" fill="#fff" stroke="#444" />
    </Svg>,
  ];
  return (
    <div className="absolute left-[1469px] top-[48px] z-10 flex w-[35px] flex-col border-l border-t border-[#b2b2b2]">
      {icons.map((icon, i) => (
        <div
          key={i}
          className={`flex h-[30px] items-center justify-center border-b border-[#a9a9a9] ${
            i === 4 ? "bg-[#f9f9f9]" : "bg-[#d4d4d4]"
          }`}
        >
          {icon}
        </div>
      ))}
    </div>
  );
}

function Splitter({ grips = false }: { grips?: boolean }) {
  return (
    <div className="relative ml-[1px] h-[7px] shrink-0 border-y border-[#a7a9b3] bg-[#6f7388] [background-clip:content-box] py-[1.5px]">
      {grips && (
        <div className="absolute left-[195px] top-[-1px] flex gap-[4px]">
          {[0, 1, 2].map((i) => (
            <span key={i} className="block h-0 w-0 border-x-[3px] border-b-[4px] border-x-transparent border-b-[#111]" />
          ))}
        </div>
      )}
    </div>
  );
}

function TaskPane() {
  const tree: { label: string; icon: ReactNode }[] = [
    { label: "Appearances(color)", icon: <Ball s={19} /> },
    { label: "Scenes", icon: <Scenes s={22} /> },
    {
      label: "Decals",
      icon: (
        <Svg s={19}>
          <path d="M3 4v12c0 3 12 3 12 0V4" fill="#eeeeee" stroke="#444" />
          <ellipse cx="9" cy="4" rx="6" ry="2.500" fill="#dcdcdc" stroke="#444" />
          <rect x="6" y="9" width="6" height="4" fill="#6aa7cc" stroke="#444" strokeWidth="0.500" />
        </Svg>
      ),
    },
  ];
  const tools: ReactNode[] = [
    <Svg key="1">
      <circle cx="10" cy="10" r="7.500" stroke="#d0d0d0" />
      <path d="M14 10H8M10 7l-3 3 3 3" stroke="#c8c8c8" strokeWidth="2" />
    </Svg>,
    <Svg key="2">
      <circle cx="10" cy="10" r="7.500" stroke="#d0d0d0" />
      <path d="M6 10h6M10 7l3 3-3 3" stroke="#c8c8c8" strokeWidth="2" />
    </Svg>,
    <Svg key="3">
      <circle cx="9" cy="8" r="7" fill="#d8dde0" />
      <path d="M10 15l6-6 3 3-8 7Z" fill="#e4e7e9" stroke="#c8ccd0" />
    </Svg>,
    <Svg key="4">
      <path d="M4 5l4-2 4-1 4 2v12l-4 2-4 1-4-3Z" stroke="#cfcfcf" />
      <path d="M8 3v16M12 2v16" stroke="#cfcfcf" />
    </Svg>,
    <Svg key="5">
      <path d="M2 7h6l2 2h6v9H2Z" stroke="#d4d4d4" />
      <path d="M4 1l1 3 3 1-3 1-1 3-1-3-3-1 3-1Z" fill="#e6d8a8" />
    </Svg>,
    <Svg key="6">
      <path d="M3 8a7 7 0 0 1 13-2l2-1v6h-6l2-2a4 4 0 0 0-7 1ZM17 12a7 7 0 0 1-13 2l-2 1V9h6l-2 2a4 4 0 0 0 7-1Z" fill="#2c86b8" stroke="#174a63" strokeWidth="0.500" />
    </Svg>,
    <Svg key="7">
      <path d="M10 2l5 6h-3v9H8V8H5Z" fill="#dddddd" stroke="#cccccc" />
    </Svg>,
  ];
  return (
    <aside className="flex w-[416px] shrink-0 flex-col border-l border-[#555] bg-[#f9f9f9]">
      <div className="relative flex h-[23px] shrink-0 items-center justify-center border-b-2 border-[#2a2a2a] bg-[#a9abaf]">
        <span className="absolute left-[7px] top-[-2px] text-[15px] font-bold leading-[18px] text-[#222]">«</span>
        <span className="text-[14px] font-bold text-[#111]">Appearances, Scenes, and Decals</span>
        <span className="absolute right-[1px] top-[2px]">
          <Svg s={17}>
            <path d="M12 1l7 7-3 1-4 5 1 3-3 1-3-3-5 4 4-5-3-3 1-3 3 1 5-4Z" fill="#333" stroke="#eee" strokeWidth="0.500" />
          </Svg>
        </span>
      </div>
      <div className="flex h-[34px] shrink-0 items-center border-b border-[#c0c0c0] pl-[1px]">
        {tools.map((t, i) => (
          <span key={i} className="flex items-center">
            <span className="flex w-[27px] justify-center">{t}</span>
            {i === 1 && (
              <span className="ml-[3px] mr-[5px]">
                <Caret dark />
              </span>
            )}
          </span>
        ))}
      </div>
      <div className="flex h-[178px] shrink-0 flex-col pt-[7px]">
        {tree.map((row) => (
          <div key={row.label} className="flex h-[24px] items-center">
            <span className="ml-[7px] flex w-[10px] justify-center">
              <svg width="7" height="12" viewBox="0 0 7 12" fill="none">
                <path d="M1 1l5 5-5 5" stroke="#8a8a8a" strokeWidth="1.300" />
              </svg>
            </span>
            <span className="ml-[7px] flex w-[24px] justify-center">{row.icon}</span>
            <span className="ml-[2px] text-[14px] text-[#222]">{row.label}</span>
          </div>
        ))}
      </div>
      <Splitter />
      <div className="ml-[4px] mr-[2px] mt-[5px] flex h-[60px] shrink-0 justify-center border border-black bg-[#ffff80] pt-[2px] text-[14px] text-[#222]">
        Select items to drag and drop.
      </div>
      <div className="mt-[5px]">
        <Splitter grips />
      </div>
      <div className="flex-1" />
      <div className="h-px bg-[#333]" />
    </aside>
  );
}

function BottomTabs() {
  const nav = ["M7 3v8M12 3 8 7l4 4", "M10 3 6 7l4 4", "M5 3l4 4-4 4", "M3 3l4 4-4 4M8 3v8"];
  return (
    <div className="flex h-[20px] shrink-0 items-stretch border-b border-[#999] bg-[#f6f6f6]">
      <div className="ml-[2px] flex w-[81px] border-t border-[#444] bg-[#a3a5b5]">
        {nav.map((d, i) => (
          <span key={i} className="flex flex-1 items-center justify-center border-r border-[#c8cad4]">
            <Svg s={14} vb={14}>
              <path d={d} fill="#777a8a" stroke="#777a8a" />
            </Svg>
          </span>
        ))}
      </div>
      <div className="flex w-[75px] items-center justify-end pr-[11px] text-[15.5px] font-bold leading-none text-[#111]">
        Model
      </div>
      <div className="flex w-[90px] items-center justify-center border-x border-t border-[#999] bg-[#d2d2d2] text-[15px] leading-none text-[#222]">
        3D Views
      </div>
      <div className="flex w-[143px] items-center justify-center border-r border-t border-[#999] bg-[#d2d2d2] pr-[8px] text-[15px] leading-none text-[#222]">
        Motion Study 1
      </div>
    </div>
  );
}

function StatusBar() {
  const Sep = () => <span className="-mt-[4px] h-[20px] w-px shrink-0 bg-[#d0d0d0]" />;
  return (
    <div className="flex h-[22px] shrink-0 items-center bg-[#f9f9f9] pt-[4px] text-[14px] leading-none text-[#222]">
      <span className="ml-px w-[1144px] shrink-0">Part1</span>
      <span className="w-[89px] shrink-0">0.52mm</span>
      <span className="w-[73px] shrink-0">0.63mm</span>
      <span className="w-[56px] shrink-0">0mm</span>
      <span className="w-[104px] shrink-0 whitespace-nowrap">Under Defined</span>
      <Sep />
      <span className="ml-[10px] w-[211px] shrink-0 whitespace-nowrap">Editing Sketch3 (Locked Focus)</span>
      <Sep />
      <span className="-mt-[4px] ml-[11px] w-[19px] shrink-0">
        <Traffic s={18} />
      </span>
      <Sep />
      <span className="ml-[39px] w-[68px] shrink-0">MMGS</span>
      <span className="-mt-[2px]">
        <Caret dark />
      </span>
      <span className="-mt-[4px] ml-[64px]">
        <Svg s={18}>
          <path d="M2 6l5-4 11 9-5 6Z" fill="#efefef" stroke="#555" />
          <path d="M4 8l6 5M6 6l6 5" stroke="#777" />
          <circle cx="7" cy="6" r="1" fill="#555" />
        </Svg>
      </span>
    </div>
  );
}

function SwIcon({ year }: { year: string }) {
  return (
    <span className="relative block h-[34px] w-[34px]">
      <svg width="34" height="30" viewBox="0 0 34 30" className="block">
        <path d="M17 1 32 7v16l-15 6-15-6V7Z" fill="#b51c1e" />
        <path d="M17 1 32 7 17 13 2 7Z" fill="#d8393b" />
      </svg>
      <span className="absolute left-[4px] top-[8px] font-['Liberation_Sans',sans-serif] text-[15px] font-bold leading-none text-white">S</span>
      <span className="absolute left-[16px] top-[6px] font-['Liberation_Sans',sans-serif] text-[15px] font-bold leading-none text-white">W</span>
      <span className="absolute bottom-0 right-[-3px] font-['Liberation_Sans',sans-serif] text-[9px] font-bold leading-none text-white">{year}</span>
    </span>
  );
}

function Taskbar() {
  const apps: { key: string; node: ReactNode; open?: boolean; active?: boolean }[] = [
    {
      key: "start",
      node: (
        <Svg s={20}>
          <path d="M0 3l8-1v7.500H0ZM9 1.800 20 0v9.500H9ZM0 10.500h8V18l-8-1ZM9 10.500h11V20L9 18.200Z" fill="#fff" />
        </Svg>
      ),
    },
    {
      key: "search",
      node: (
        <Svg s={24} vb={24}>
          <circle cx="14" cy="9" r="7" stroke="#fff" strokeWidth="1.400" />
          <path d="M9 14 2 22" stroke="#fff" strokeWidth="1.400" />
        </Svg>
      ),
    },
    {
      key: "taskview",
      node: (
        <Svg s={24} vb={24}>
          <rect x="5.500" y="2" width="13" height="20" stroke="#fff" strokeWidth="1.300" />
          <path d="M2.500 6H1v12h1.500M21.500 6H23v12h-1.500" stroke="#fff" />
        </Svg>
      ),
    },
    { key: "edge", node: <FaEdge size={29} className="text-[#0a78d4]" /> },
    {
      key: "explorer",
      node: (
        <Svg s={30} vb={30}>
          <path d="M1 3h10l2 3h16v22H1Z" fill="#f5cf6b" stroke="#c99c35" strokeWidth="0.600" />
          <path d="M4 1h7v5H4Z" fill="#fff3c9" />
          <path d="M8 19h14v2h-2v7H10v-7H8Z" fill="#2d9ddc" />
          <rect x="12" y="23" width="6" height="5" fill="#f5cf6b" />
        </Svg>
      ),
    },
    {
      key: "mail",
      node: (
        <Svg s={30} vb={30}>
          <path d="M0 11 15 2l15 9v17H0Z" fill="#fff" />
          <path d="M0 11l15 8 15-8-10 9 4 6-9-7Z" fill="#000" />
        </Svg>
      ),
    },
    {
      key: "store",
      node: (
        <Svg s={32} vb={32}>
          <path d="M2 8h28v23H2Z" fill="#fff" />
          <path d="M11 9V5a5 5 0 0 1 10 0v4" stroke="#fff" strokeWidth="1.600" />
          <path d="M9 12h6v6H9Z" fill="#e8462e" />
          <path d="M17 12h6v6h-6Z" fill="#7cbb3c" />
          <path d="M9 20h6v6H9Z" fill="#2b9fe0" />
          <path d="M17 20h6v6h-6Z" fill="#f7b61b" />
        </Svg>
      ),
    },
    {
      key: "git",
      node: (
        <Svg s={30} vb={30}>
          <path d="M15 15 8 8l7-7 7 7Z" fill="#e66f6f" />
          <path d="M15 15l7-7 8 7-8 7Z" fill="#79bd47" />
          <path d="M15 15l-7-7-8 7 8 7Z" fill="#6b9ff0" />
          <path d="M15 15l7 7-7 8-7-8Z" fill="#f5d86c" />
          <path d="M15 5v20M15 12l4 2" stroke="#222" strokeWidth="1.500" />
          <circle cx="15" cy="20" r="2" fill="#222" />
        </Svg>
      ),
    },
    {
      key: "fusion",
      node: (
        <span className="flex h-[36px] w-[30px] items-start justify-center bg-[#cfe9f3] font-['Liberation_Sans',sans-serif] text-[30px] font-bold leading-[32px] text-[#d9882f]">
          F
        </span>
      ),
    },
    { key: "sw16a", node: <SwIcon year="2016" /> },
    {
      key: "arduino",
      node: (
        <Svg s={28} vb={34}>
          <circle cx="17" cy="17" r="16" fill="#108f94" />
          <circle cx="11" cy="17" r="5" stroke="#fff" strokeWidth="2.400" />
          <circle cx="23" cy="17" r="5" stroke="#fff" strokeWidth="2.400" />
        </Svg>
      ),
    },
    {
      key: "chrome",
      open: true,
      node: (
        <span className="relative block h-[32px] w-[32px] rounded-full bg-[conic-gradient(from_-30deg,#ea4335_0_120deg,#fbbc05_120deg_240deg,#34a853_240deg_360deg)]">
          <span className="absolute left-[9px] top-[9px] block h-[14px] w-[14px] rounded-full border-2 border-white bg-[#4285f4]" />
        </span>
      ),
    },
    {
      key: "e",
      node: (
        <span className="font-['Liberation_Sans',sans-serif] text-[40px] font-bold leading-none text-[#cf7f2e]">
          E
        </span>
      ),
    },
    {
      key: "13",
      node: (
        <span className="flex h-[29px] w-[29px] items-center justify-center rounded-full border-2 border-[#bbb] font-['Liberation_Serif',serif] text-[16px] leading-none text-white">
          1<sup className="text-[10px]">3</sup>
        </span>
      ),
    },
    {
      key: "py",
      node: (
        <Svg s={36} vb={36}>
          <path d="M4 1h18l8 8v26H4Z" fill="#e9eef2" stroke="#aab" strokeWidth="0.500" />
          <path d="M13 19v-4a3 3 0 0 1 3-3h6a3 3 0 0 1 3 3v4Z" fill="#3b79a9" />
          <path d="M17 19h10a3 3 0 0 1 3 3v3a3 3 0 0 1-3 3h-5a3 3 0 0 1-3-3Z" fill="#f5cf45" />
        </Svg>
      ),
    },
    {
      key: "dots",
      node: (
        <Svg s={20}>
          <circle cx="12" cy="3" r="1.800" fill="#fff" />
          <circle cx="5" cy="18" r="1.200" fill="#ddd" />
        </Svg>
      ),
    },
    {
      key: "opera",
      node: (
        <Svg s={34} vb={34}>
          <ellipse cx="17" cy="17" rx="12" ry="15" stroke="#d8131f" strokeWidth="6.500" />
        </Svg>
      ),
    },
    { key: "sw17", node: <SwIcon year="2017" /> },
    { key: "sw16b", node: <SwIcon year="2016" />, open: true, active: true },
  ];
  return (
    <div className="flex h-[50px] shrink-0 items-stretch bg-black text-white">
      {apps.map((a) => (
        <div
          key={a.key}
          className={`relative flex w-[61.8px] shrink-0 items-center justify-center ${a.active ? "bg-[#343434]" : ""}`}
        >
          {a.node}
          {a.open && <span className="absolute inset-x-0 bottom-0 h-[3px] bg-[#76b9ed]" />}
        </div>
      ))}
      <div className="flex flex-1 items-center pl-[358px]">
        <Svg s={24} vb={24}>
          <circle cx="16" cy="6" r="3.200" stroke="#fff" strokeWidth="1.200" />
          <path d="M12 15a5 5 0 0 1 9-2" stroke="#fff" strokeWidth="1.200" />
          <circle cx="9" cy="11" r="3.200" stroke="#fff" strokeWidth="1.200" />
          <path d="M3 21c0-8 12-8 12 0" stroke="#fff" strokeWidth="1.200" />
        </Svg>
        <ChevronUp size={24} strokeWidth={1.200} className="ml-[22px]" />
        <Cloud size={22} fill="#fff" strokeWidth={1} className="ml-[7px]" />
        <span className="relative ml-[9px] flex h-[12px] w-[18px] border border-white p-[1px]">
          <span className="block h-full w-[9px] bg-white" />
        </span>
        <Wifi size={20} strokeWidth={1.200} className="ml-[10px] -rotate-45 text-white" />
        <Volume2 size={21} strokeWidth={1.200} className="ml-[9px]" />
        <span className="ml-[13px] text-[14px] leading-none">ENG</span>
        <div className="ml-[21px] flex flex-col items-center text-[14.5px] leading-[23px]">
          <span>2:07 AM</span>
          <span>6/2/2018</span>
        </div>
        <span className="relative ml-[23px] flex h-[19px] w-[20px] flex-col justify-center gap-[3px] bg-white px-[3px]">
          <span className="block h-px bg-black" />
          <span className="block h-px bg-black" />
          <span className="block h-px bg-black" />
          <span className="absolute left-[9px] top-[9px] flex h-[20px] w-[20px] items-center justify-center rounded-full border border-[#999] bg-[#333] text-[12px] font-bold leading-none text-white">
            5
          </span>
        </span>
      </div>
    </div>
  );
}

export default function App() {
  return (
    <div className="flex h-[1080px] w-[1920px] flex-col overflow-hidden bg-[#f9f9f9] font-['Noto_Sans',sans-serif]">
      <TitleBar />
      <Ribbon />
      <div className="flex min-h-0 flex-1">
        <div className="flex w-[1504px] shrink-0 flex-col">
          <div className="relative flex min-h-0 flex-1 flex-col bg-[linear-gradient(150deg,#fcfdff_5%,#eff3fc_30%,#d9e0ec_62%)]">
            <CommandTabs />
            <HeadsUp />
            <ViewportControls />
            <TaskPaneTabs />
            <div className="flex min-h-0 flex-1">
              <LeftPanel />
              <div className="relative flex flex-1 flex-col">
                {/* part tree, top left of the graphics area */}
                <div className="absolute left-[4px] top-[9px] flex items-center">
                  <span className="block h-0 w-0 border-y-[4px] border-l-[4px] border-y-transparent border-l-[#222]" />
                  <span className="relative ml-[8px] flex">
                    <Traffic s={18} />
                    <span className="-ml-[6px]">
                      <PartIcon s={16} />
                    </span>
                  </span>
                  <span className="ml-[2px] whitespace-pre text-[14px] tracking-[0.2px] text-[#222]">{"Part1  (Default<<De..."}</span>
                </div>
                <svg width="50" height="40" viewBox="0 0 50 40" className="absolute left-[1127px] top-[12px]">
                  <path d="M2 20l8-8 9 11L40 1l8 7-29 31Z" fill="#c4dcc8" />
                </svg>
                {/* pull tab of the panel */}
                <div className="absolute left-[-1px] top-[382px] z-20 flex h-[48px] w-[11px] items-center justify-center border-y border-r border-[#a9a9a9] bg-[#f9f9f9]">
                  <span className="h-[6px] w-[6px] rounded-full border border-[#888] bg-[#c8c8c8]" />
                </div>
                <div className="flex-1" />
                <div className="mr-[4px] flex h-[429px] border-t-2 border-[#1a1a1a] bg-[#696b79]">
                  <div className="w-[938px]" />
                  <div className="w-[2px] bg-[#111]" />
                </div>
                <SketchDrawing />
                <Triad />
              </div>
            </div>
          </div>
          <BottomTabs />
        </div>
        <TaskPane />
      </div>
      <StatusBar />
      <Taskbar />
    </div>
  );
}
